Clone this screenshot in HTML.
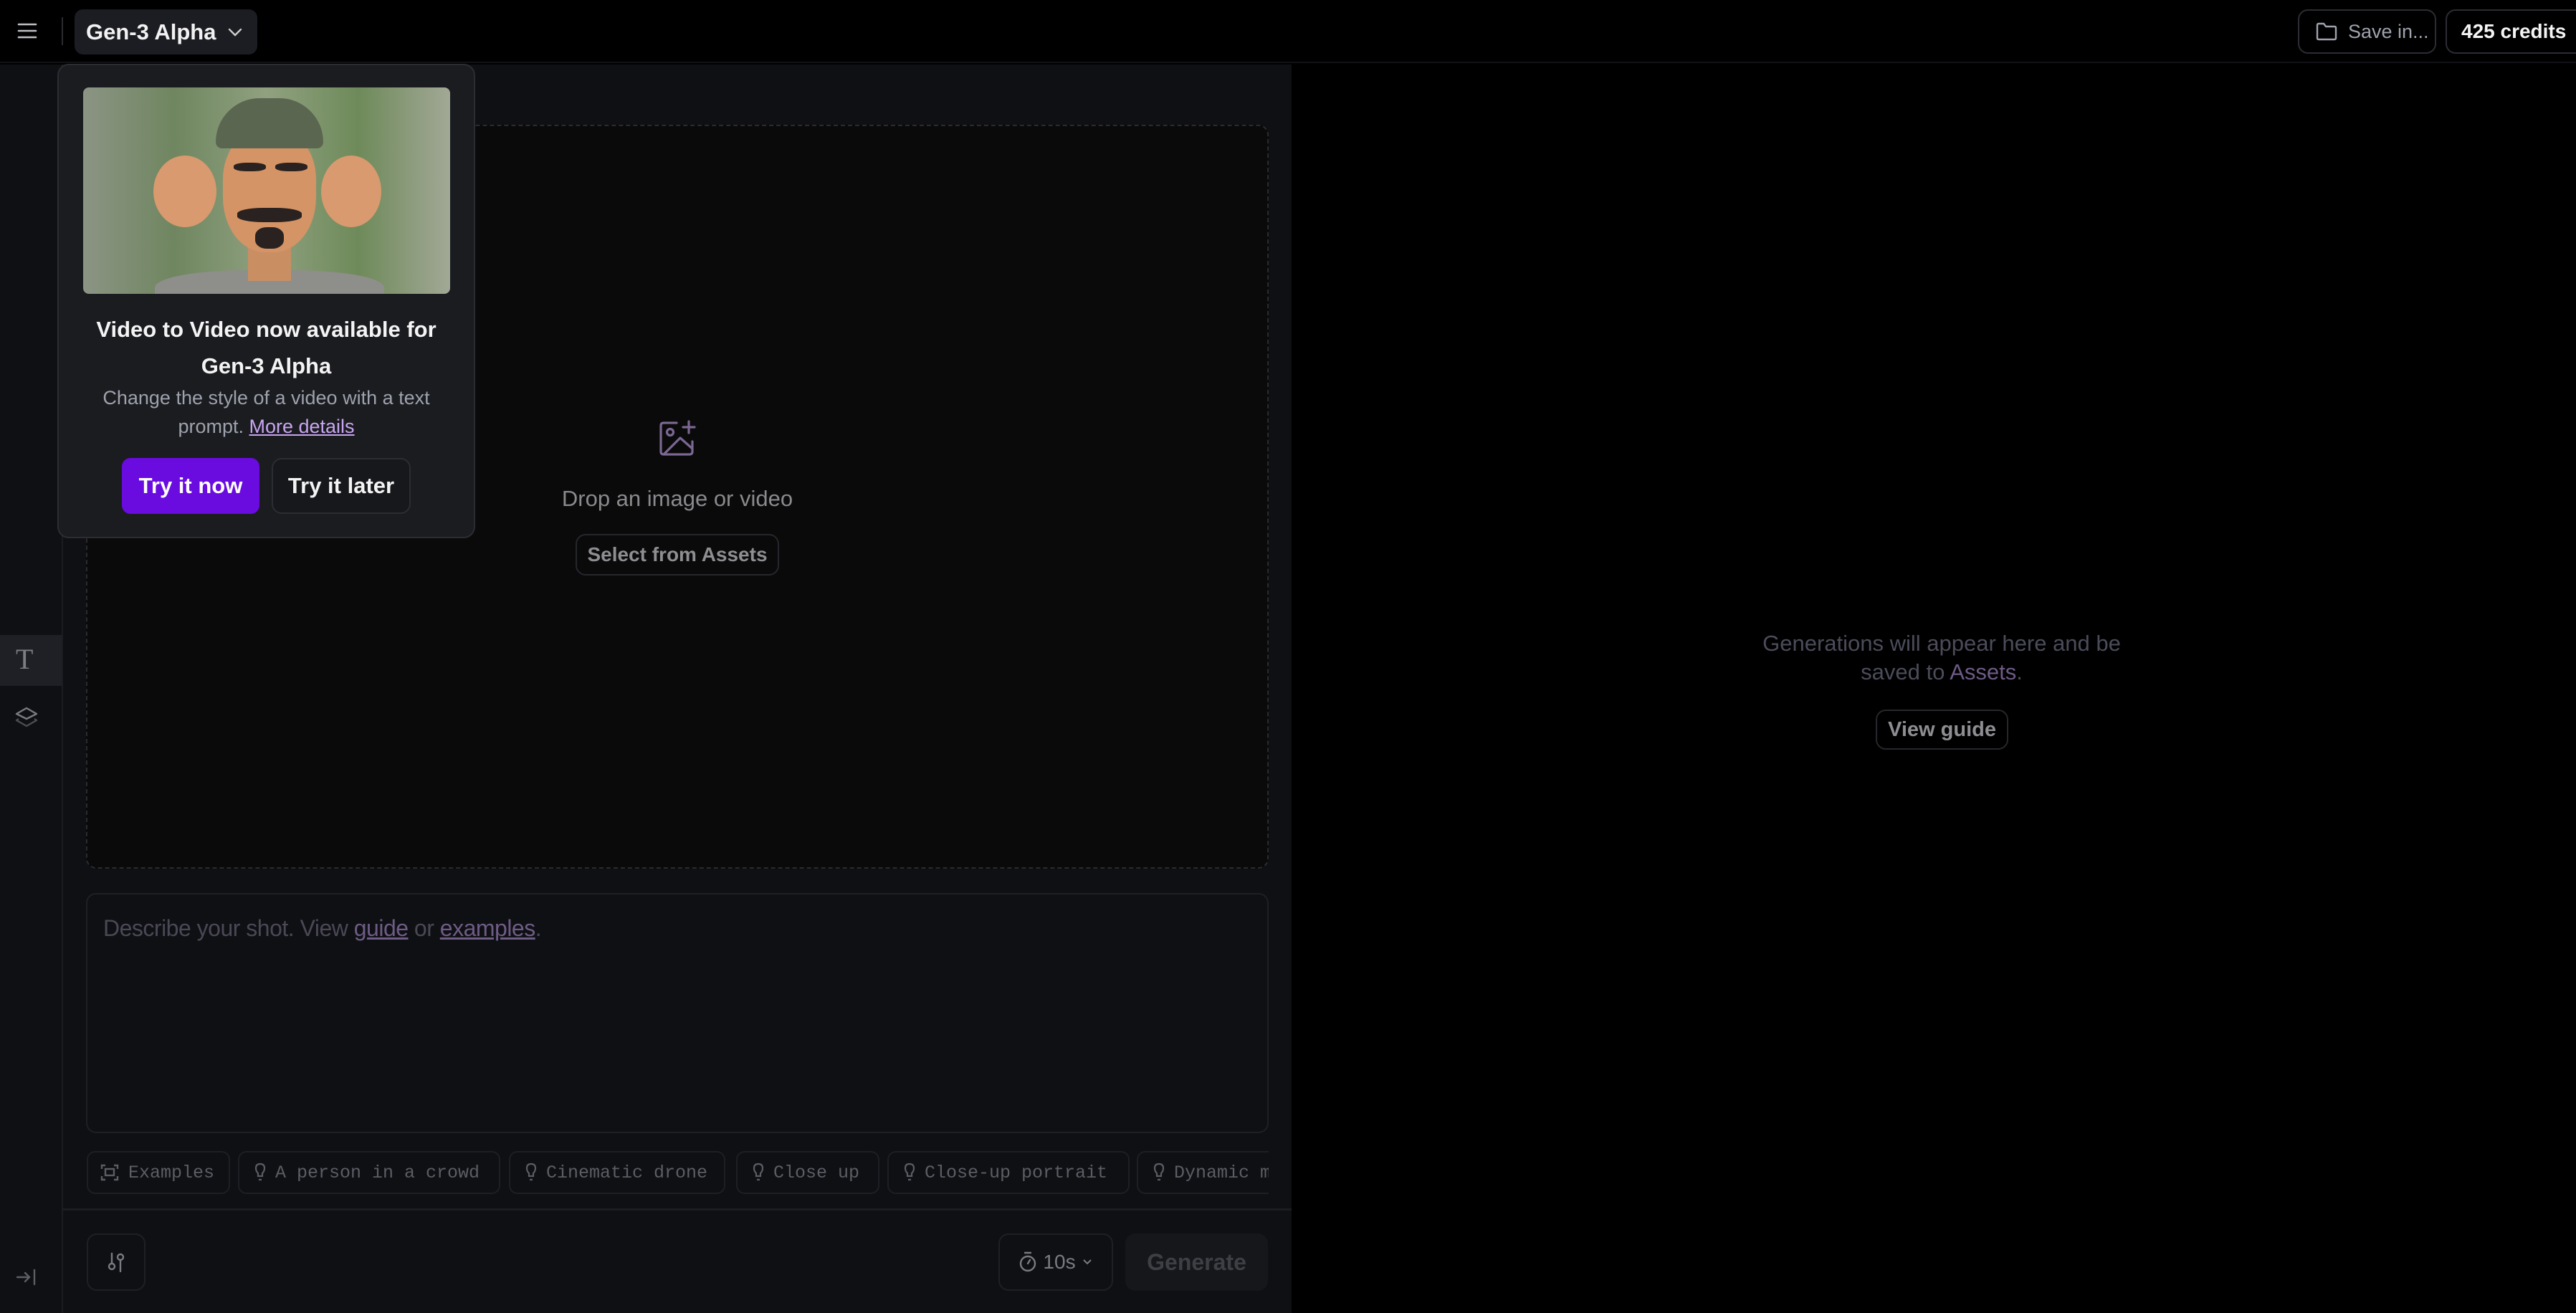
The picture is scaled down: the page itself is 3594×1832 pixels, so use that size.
<!DOCTYPE html>
<html><head><meta charset="utf-8"><style>
*{box-sizing:border-box;margin:0;padding:0}
body{width:3594px;height:1832px;background:#000;font-family:"Liberation Sans",sans-serif;position:relative;overflow:hidden;color:#fff}
.a{position:absolute}
.btn{position:absolute;border:2px solid #2a2b30;border-radius:14px;display:flex;align-items:center;justify-content:center}
.chip{position:absolute;top:1606px;height:60px;border:2px solid #1e1f24;border-radius:12px;display:flex;align-items:center;padding-left:20px;font-family:"Liberation Mono",monospace;font-size:25px;color:#5c5d65;white-space:nowrap;overflow:hidden}
.chip svg{margin-right:12px;flex:none}
</style></head><body>
<!-- header -->
<div class="a" style="left:0;top:0;width:3594px;height:88px;background:#000;border-bottom:2px solid #111215"></div>
<svg class="a" style="left:24px;top:30px" width="28" height="26" viewBox="0 0 28 26"><path d="M2 4H26M2 13H26M2 22H26" stroke="#bfc0c6" stroke-width="2.6" stroke-linecap="round"/></svg>
<div class="a" style="left:86px;top:24px;width:2px;height:39px;background:#2a2b30"></div>
<div class="a" style="left:104px;top:13px;width:255px;height:63px;background:#1c1d22;border-radius:12px;display:flex;align-items:center;padding-left:16px;font-size:31px;font-weight:bold;color:#f2f2f2">Gen-3 Alpha<svg style="margin-left:16px" width="22" height="14" viewBox="0 0 22 14"><path d="M3 3L11 11L19 3" stroke="#ccc" stroke-width="2.4" fill="none" stroke-linecap="round"/></svg></div>
<div class="btn" style="left:3206px;top:13px;width:193px;height:62px;border-color:#2c2d33;font-size:27px;color:#9ea2ad;justify-content:flex-start;padding-left:22px"><svg width="32" height="28" viewBox="0 0 32 28" style="margin-right:14px"><path d="M3 5Q3 3 5 3H12L15 7H27Q29 7 29 9V23Q29 25 27 25H5Q3 25 3 23Z" stroke="#9ea2ad" stroke-width="2.4" fill="none" stroke-linejoin="round"/></svg>Save in...</div>
<div class="btn" style="left:3412px;top:13px;width:200px;height:62px;border-color:#2c2d33;font-size:28px;font-weight:bold;color:#f4f4f4;justify-content:flex-start;padding-left:20px">425 credits</div>
<!-- left panel -->
<div class="a" style="left:0;top:90px;width:1802px;height:1742px;background:#0f1013"></div>
<div class="a" style="left:86px;top:90px;width:2px;height:1742px;background:#1c1d21"></div>
<div class="a" style="left:0;top:886px;width:86px;height:71px;background:#1f2025"></div>
<div class="a" style="left:22px;top:896px;font-family:'Liberation Serif',serif;font-size:40px;color:#7d7e84">T</div>
<svg class="a" style="left:20px;top:985px" width="34" height="34" viewBox="0 0 34 34"><path d="M17 3L31 11L17 18L3 11Z" stroke="#7a7b82" stroke-width="2.4" fill="none" stroke-linejoin="round"/><path d="M6 18L3 20L17 28L31 20L28 18" stroke="#4c4d54" stroke-width="2.4" fill="none" stroke-linejoin="round"/></svg>
<svg class="a" style="left:22px;top:1768px" width="30" height="28" viewBox="0 0 30 28"><path d="M2 14H19M13 8L19 14L13 20M26 4V24" stroke="#5d5e66" stroke-width="2.4" fill="none" stroke-linecap="round"/></svg>
<!-- drop zone -->
<div class="a" style="left:120px;top:174px;width:1650px;height:1038px;background:#0a0a0b;border:2px dashed #2a2b30;border-radius:14px"></div>
<svg class="a" style="left:916px;top:584px" width="60" height="60" viewBox="0 0 60 60"><path d="M28 6H10Q6 6 6 10V46Q6 50 10 50H46Q50 50 50 46V32" stroke="#7b6791" stroke-width="3.2" fill="none" stroke-linecap="round"/><circle cx="19" cy="19" r="4.5" stroke="#7b6791" stroke-width="3.2" fill="none"/><path d="M10 50L33 27L50 42" stroke="#7b6791" stroke-width="3.2" fill="none" stroke-linejoin="round"/><path d="M37 12H53M45 4V20" stroke="#7b6791" stroke-width="3.2" stroke-linecap="round"/></svg>
<div class="a" style="left:700px;top:678px;width:490px;text-align:center;font-size:31px;color:#8a8a8e">Drop an image or video</div>
<div class="btn" style="left:803px;top:745px;width:284px;height:58px;border-color:#26272c;font-size:28px;color:#8e8e92;font-weight:bold">Select from Assets</div>
<!-- prompt -->
<div class="a" style="left:120px;top:1246px;width:1650px;height:335px;border:2px solid #1f2025;border-radius:14px;background:#0f1013"></div>
<div class="a" style="left:144px;top:1277px;font-size:32px;color:#4a4857;letter-spacing:-0.5px">Describe your shot. View <span style="color:#6e5b86;text-decoration:underline">guide</span> or <span style="color:#6e5b86;text-decoration:underline">examples</span>.</div>
<!-- chips -->
<div class="chip" style="left:121px;width:200px;padding-left:16px"><svg width="28" height="28" viewBox="0 0 28 28"><path d="M3 9V4H8M20 4H25V9M25 19V24H20M8 24H3V19" stroke="#5c5d65" stroke-width="2.4" fill="none"/><rect x="8" y="9" width="12" height="9" stroke="#5c5d65" stroke-width="2.4" fill="none"/></svg>Examples</div>
<div class="chip" style="left:332px;width:366px"><svg width="18" height="30" viewBox="0 0 18 30"><path d="M9 3Q3 3 3 9Q3 13 6 16V20H12V16Q15 13 15 9Q15 3 9 3ZM7 25H11" stroke="#5c5d65" stroke-width="2.2" fill="none"/></svg>A person in a crowd</div>
<div class="chip" style="left:710px;width:302px"><svg width="18" height="30" viewBox="0 0 18 30"><path d="M9 3Q3 3 3 9Q3 13 6 16V20H12V16Q15 13 15 9Q15 3 9 3ZM7 25H11" stroke="#5c5d65" stroke-width="2.2" fill="none"/></svg>Cinematic drone</div>
<div class="chip" style="left:1027px;width:200px"><svg width="18" height="30" viewBox="0 0 18 30"><path d="M9 3Q3 3 3 9Q3 13 6 16V20H12V16Q15 13 15 9Q15 3 9 3ZM7 25H11" stroke="#5c5d65" stroke-width="2.2" fill="none"/></svg>Close up</div>
<div class="chip" style="left:1238px;width:338px"><svg width="18" height="30" viewBox="0 0 18 30"><path d="M9 3Q3 3 3 9Q3 13 6 16V20H12V16Q15 13 15 9Q15 3 9 3ZM7 25H11" stroke="#5c5d65" stroke-width="2.2" fill="none"/></svg>Close-up portrait</div>
<div class="chip" style="left:1586px;width:184px;border-right:none;border-radius:12px 0 0 12px"><svg width="18" height="30" viewBox="0 0 18 30"><path d="M9 3Q3 3 3 9Q3 13 6 16V20H12V16Q15 13 15 9Q15 3 9 3ZM7 25H11" stroke="#5c5d65" stroke-width="2.2" fill="none"/></svg>Dynamic m</div>
<div class="a" style="left:88px;top:1686px;width:1714px;height:3px;background:#1c1d21"></div>
<!-- bottom -->
<div class="btn" style="left:121px;top:1721px;width:82px;height:80px;border-color:#1f2025"><svg width="30" height="34" viewBox="0 0 30 34"><circle cx="9" cy="23" r="4" stroke="#7a7b82" stroke-width="2.4" fill="none"/><circle cx="21" cy="10" r="4" stroke="#7a7b82" stroke-width="2.4" fill="none"/><path d="M9 5V19M21 14V30" stroke="#7a7b82" stroke-width="2.4" stroke-linecap="round"/></svg></div>
<div class="btn" style="left:1393px;top:1721px;width:160px;height:80px;border-color:#1f2025;font-size:28px;color:#7a7b82"><svg width="26" height="32" viewBox="0 0 26 32" style="margin-right:8px"><circle cx="13" cy="18" r="10" stroke="#7a7b82" stroke-width="2.4" fill="none"/><path d="M9 3H17M13 18L16 13" stroke="#7a7b82" stroke-width="2.4" stroke-linecap="round"/></svg>10s<svg width="16" height="10" viewBox="0 0 16 10" style="margin-left:8px"><path d="M3 2L8 7L13 2" stroke="#7a7b82" stroke-width="2" fill="none"/></svg></div>
<div class="a" style="left:1570px;top:1721px;width:199px;height:80px;background:#16171a;border-radius:14px;display:flex;align-items:center;justify-content:center;font-size:32px;font-weight:bold;color:#3e3f45">Generate</div>
<!-- right -->
<div class="a" style="left:2309px;top:878px;width:800px;text-align:center;font-size:31px;line-height:40px;color:#4b4c5a">Generations will appear here and be<br>saved to <span style="color:#6e5b86">Assets</span>.</div>
<div class="btn" style="left:2617px;top:990px;width:185px;height:56px;border-color:#26272c;font-size:29px;color:#8e8e92;font-weight:bold">View guide</div>
<!-- popup -->
<div class="a" style="left:80px;top:89px;width:583px;height:662px;background:#1b1c20;border:2px solid #2c2d33;border-radius:16px"></div>
<div class="a" style="left:116px;top:122px;width:512px;height:288px;border-radius:8px;overflow:hidden;background:linear-gradient(90deg,#8c9484 0,#6f8660 25%,#90a180 50%,#6e8a5a 75%,#a2a896 100%)">
<div class="a" style="left:100px;top:255px;width:320px;height:60px;background:#8e8e8a;border-radius:40% 40% 0 0"></div>
<div class="a" style="left:230px;top:200px;width:60px;height:70px;background:#c98f63"></div>
<div class="a" style="left:98px;top:95px;width:88px;height:100px;background:#d89a6e;border-radius:50%"></div>
<div class="a" style="left:332px;top:95px;width:84px;height:100px;background:#d89a6e;border-radius:50%"></div>
<div class="a" style="left:195px;top:60px;width:130px;height:170px;background:#d49466;border-radius:40% 40% 45% 45%"></div>
<div class="a" style="left:185px;top:15px;width:150px;height:70px;background:#5b6650;border-radius:70px 70px 10px 10px"></div>
<div class="a" style="left:210px;top:105px;width:45px;height:12px;background:#2a2220;border-radius:40%"></div>
<div class="a" style="left:268px;top:105px;width:45px;height:12px;background:#2a2220;border-radius:40%"></div>
<div class="a" style="left:215px;top:168px;width:90px;height:20px;background:#2a2220;border-radius:40%"></div>
<div class="a" style="left:240px;top:195px;width:40px;height:30px;background:#2a2220;border-radius:40%"></div>
</div>
<div class="a" style="left:80px;top:434px;width:583px;text-align:center;font-size:31px;font-weight:bold;line-height:51px;color:#f4f4f4">Video to Video now available for<br>Gen-3 Alpha</div>
<div class="a" style="left:80px;top:535px;width:583px;text-align:center;font-size:27px;line-height:40px;color:#9ea2ad">Change the style of a video with a text<br>prompt. <span style="color:#c8a6f0;text-decoration:underline">More details</span></div>
<div class="a" style="left:170px;top:639px;width:192px;height:78px;background:#6a0be0;border-radius:12px;display:flex;align-items:center;justify-content:center;font-size:31px;font-weight:bold;color:#fff">Try it now</div>
<div class="btn" style="left:379px;top:639px;width:194px;height:78px;border-color:#2c2d33;background:#17181b;font-size:31px;font-weight:bold;color:#f4f4f4">Try it later</div>
</body></html>
